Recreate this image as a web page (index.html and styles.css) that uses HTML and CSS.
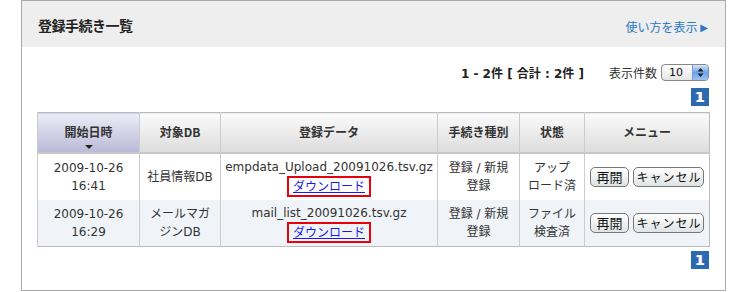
FILE: index.html
```html
<!DOCTYPE html>
<html lang="ja">
<head>
    <meta charset="UTF-8">
    <meta name="viewport" content="width=device-width, initial-scale=1.0">
    <title>登録手続き一覧</title>
    <link rel="stylesheet" href="styles.css">
</head>
<body>
    <div class="panel">
        <div class="panel-head">
            <h1>登録手続き一覧</h1>
            <a class="help-link" href="#">使い方を表示 <span class="tri">&#9654;</span></a>
        </div>

        <div class="panel-body">
            <div class="pager-info">
                <span class="count">1 - 2件 [ 合計 : 2件 ]</span>
                <span class="per-page">表示件数</span>
                <div class="select">
                    <span class="select-val">10</span>
                    <span class="select-btn">
                        <svg width="7" height="11" viewBox="0 0 7 11"><path d="M3.5 1 L6.5 4.5 H0.5 Z M3.5 10 L6.5 6.5 H0.5 Z" fill="#222"/></svg>
                    </span>
                </div>
            </div>
            <div class="pages"><span class="page-no">1</span></div>

            <table class="list">
                <thead>
                    <tr>
                        <th class="sorted" style="width: 102px">開始日時<span class="sort-arrow"></span></th>
                        <th style="width: 81px">対象DB</th>
                        <th style="width: 217px">登録データ</th>
                        <th style="width: 82px">手続き種別</th>
                        <th style="width: 65px">状態</th>
                        <th>メニュー</th>
                    </tr>
                </thead>
                <tbody>
                    <tr>
                        <td>2009-10-26<br>16:41</td>
                        <td>社員情報DB</td>
                        <td>empdata_Upload_20091026.tsv.gz<br><span class="dl"><a href="#">ダウンロード</a></span></td>
                        <td>登録 / 新規<br>登録</td>
                        <td>アップ<br>ロード済</td>
                        <td class="menu"><button class="btn">再開</button><button class="btn btn-cancel">キャンセル</button></td>
                    </tr>
                    <tr class="alt">
                        <td>2009-10-26<br>16:29</td>
                        <td>メールマガ<br>ジンDB</td>
                        <td>mail_list_20091026.tsv.gz<br><span class="dl"><a href="#">ダウンロード</a></span></td>
                        <td>登録 / 新規<br>登録</td>
                        <td>ファイル<br>検査済</td>
                        <td class="menu"><button class="btn">再開</button><button class="btn btn-cancel">キャンセル</button></td>
                    </tr>
                </tbody>
            </table>

            <div class="pages pages-bottom"><span class="page-no">1</span></div>
        </div>
    </div>
</body>
</html>
```

FILE: styles.css
```css
body {
    margin: 0;
    padding: 0;
    font-family: "DejaVu Sans", "Noto Sans CJK JP", sans-serif;
    font-size: 12px;
    color: #333;
    background: #fff;
}

.panel {
    margin-left: 21px;
    width: 703px;
    border: 1px solid #aaa;
}

.panel-head {
    height: 46px;
    background-color: #eee;
    padding: 0 16px;
    display: flex;
    justify-content: space-between;
}

.panel-head h1 {
    margin: 0;
    padding-top: 14px;
    font-family: "Noto Sans CJK JP", sans-serif;
    font-size: 14px;
    line-height: 20px;
    font-weight: bold;
    color: #222;
    letter-spacing: -0.5px;
}

.help-link {
    align-self: flex-end;
    margin-bottom: 10px;
    margin-right: 1px;
    font-family: "Noto Sans CJK JP", sans-serif;
    font-size: 12px;
    line-height: 18px;
    color: #2a78c6;
    text-decoration: none;
}

.help-link .tri {
    font-family: "DejaVu Sans", sans-serif;
    font-size: 10px;
    vertical-align: 1px;
}

.panel-body {
    padding: 17px 15px 21px;
}

.pager-info {
    display: flex;
    justify-content: flex-end;
    align-items: center;
    height: 16px;
}

.count {
    font-weight: bold;
    color: #222;
    margin-right: 25px;
}

.per-page {
    margin-right: 4px;
    color: #333;
}

.select {
    display: flex;
    width: 46px;
    height: 15px;
    border: 1px solid #888;
    border-radius: 4px;
    overflow: hidden;
    margin-right: 1px;
    background: linear-gradient(#fff, #e4e4e4);
}

.select-val {
    flex-grow: 1;
    font-size: 11px;
    line-height: 15px;
    padding-left: 7px;
    color: #111;
}

.select-btn {
    width: 15px;
    display: flex;
    align-items: center;
    justify-content: center;
    background: linear-gradient(#d6e6fb, #6aa3ea 50%, #9cc3f3);
    border-left: 1px solid #7a9cc8;
}

.pages {
    display: flex;
    justify-content: flex-end;
    margin-top: 8px;
    padding-right: 1px;
}

.pages-bottom {
    margin-top: 4px;
}

.page-no {
    width: 18px;
    height: 18px;
    background-color: #2d69b0;
    color: #fff;
    font-family: "DejaVu Sans", sans-serif;
    font-weight: bold;
    font-size: 14px;
    line-height: 18px;
    text-align: center;
    text-shadow: -1px 0 #b4b4e8;
}

.list {
    margin-top: 6px;
    width: 673px;
    border-collapse: collapse;
    table-layout: fixed;
    border: 1px solid #bbb;
}

.list th {
    height: 40px;
    padding: 10px 2px 0;
    vertical-align: top;
    box-sizing: border-box;
    font-family: "Noto Sans CJK JP", sans-serif;
    font-size: 12px;
    line-height: 18px;
    font-weight: bold;
    color: #333;
    background: linear-gradient(#fbfbfb, #dcdcdc);
    border-left: 1px solid #ccc;
    border-bottom: 2px solid #c8c8c8;
}

.list th.sorted {
    background: linear-gradient(#ececf6, #b9b9d8);
}

.sort-arrow {
    display: block;
    width: 0;
    height: 0;
    margin: 4px auto 0;
    border-left: 4px solid transparent;
    border-right: 4px solid transparent;
    border-top: 4px solid #222;
}

.list td {
    padding: 4px 2px 3px;
    text-align: center;
    vertical-align: middle;
    line-height: 18px;
    border-left: 1px solid #ccc;
    color: #333;
}

.list td.menu {
    white-space: nowrap;
}

.list tr.alt td {
    background-color: #f0f3f8;
}

.dl {
    display: inline-block;
    vertical-align: top;
    border: 2px solid #e8000d;
    padding: 0 4px;
    line-height: 16px;
}

.dl a {
    font-family: "Noto Sans CJK JP", sans-serif;
    color: #1a1ae6;
}

.btn {
    font-family: "Noto Sans CJK JP", sans-serif;
    font-size: 13px;
    line-height: 16px;
    height: 20px;
    padding: 0 5px;
    margin: 0 2px;
    color: #111;
    border: 1px solid #777;
    border-radius: 5px;
    background: linear-gradient(#fff, #dfe3e3);
    vertical-align: middle;
}

.btn-cancel {
    font-size: 12px;
    letter-spacing: 1px;
    padding: 0 1px 0 3px;
}
```
